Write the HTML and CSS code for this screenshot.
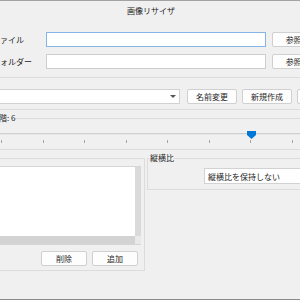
FILE: index.html
```html
<!DOCTYPE html>
<html lang="ja">
<head>

    <meta charset="UTF-8">
    <title>画像リサイザ</title>

    <link rel="stylesheet" href="styles.css">

</head>
<body>

    <div class="window">

        <div class="titlebar">画像リサイザ</div>

        <div class="content">

            <div class="file-row">
                <span class="row-label">入力ファイル</span>
                <input type="text" class="text-input is-focused">
                <button class="btn btn-browse">参照...</button>
            </div>

            <div class="file-row">
                <span class="row-label">出力フォルダー</span>
                <input type="text" class="text-input">
                <button class="btn btn-browse">参照...</button>
            </div>

            <div class="group preset-group">
                <div class="combo preset-combo">
                    <span class="combo-text"></span>
                    <span class="combo-arrow"></span>
                </div>
                <button class="btn btn-preset">名前変更</button>
                <button class="btn btn-preset">新規作成</button>
                <button class="btn btn-preset">削除</button>
            </div>

            <fieldset class="group slider-group">
                <legend>縮小段階: 6</legend>
                <div class="slider">
                    <div class="slider-track"></div>
                    <div class="slider-ticks">
                        <span></span><span></span><span></span><span></span>
                        <span></span><span></span><span></span><span></span>
                    </div>
                    <svg class="slider-thumb" style="left: 85.714%" width="9" height="8" viewBox="0 0 9 8">
                        <polygon points="0,0 9,0 9,4 4.5,8 0,4" fill="#0078d7"/>
                    </svg>
                </div>
            </fieldset>

            <div class="lower">

                <fieldset class="group list-group">
                    <legend>サイズ</legend>
                    <div class="list-box">
                        <div class="list-items"></div>
                        <div class="scroll-v"></div>
                        <div class="scroll-h"></div>
                        <div class="scroll-corner"></div>
                    </div>
                    <div class="list-buttons">
                        <button class="btn btn-small">削除</button>
                        <button class="btn btn-small">追加</button>
                    </div>
                </fieldset>

                <fieldset class="group ratio-group">
                    <legend>縦横比</legend>
                    <div class="combo ratio-combo">
                        <span class="combo-text">縦横比を保持しない</span>
                    </div>
                </fieldset>

            </div>

        </div>

    </div>

</body>
</html>
```

FILE: styles.css
```css
html {
    box-sizing: border-box;
}

*,
*:before,
*:after {
    box-sizing: inherit;
}

body {
    margin: 0;
    width: 300px;
    height: 300px;
    overflow: hidden;
    background: #f0f0f0;
    font-family: "Noto Sans CJK JP", sans-serif;
    font-size: 8px;
    color: #1e1e1e;
}

button,
input {
    font: inherit;
    color: inherit;
}

.window {
    margin-left: -36px;
    width: 374px;
    height: 300px;
    padding: 0 8px;
    border-top: 1px solid #a3a3a3;
    border-bottom: 1px solid #8a8a8a;
}

.titlebar {
    height: 20px;
    line-height: 20px;
    text-align: center;
}

.content {
    padding-top: 11px;
}

/* file rows */

.file-row {
    display: flex;
    align-items: center;
    height: 15px;
    padding-left: 4px;
}

.file-row + .file-row {
    margin-top: 7px;
}

.row-label {
    width: 70px;
    flex: none;
    line-height: 15px;
}

.text-input {
    flex: none;
    width: 220px;
    height: 15px;
    margin: 0 6px 0 0;
    padding: 0;
    border: 1px solid #cdcdcd;
    background: #fff;
    outline: 0;
}

.text-input.is-focused {
    border-color: #85b5e6;
}

.btn {
    flex: none;
    height: 15px;
    margin: 0;
    padding: 0;
    line-height: 13px;
    border: 1px solid #d0d0d0;
    border-radius: 2px;
    background: #fdfdfd;
    text-align: center;
}

.btn-browse {
    width: 50px;
}

/* groups */

.group {
    margin: 0;
    border: 1px solid #dcdcdc;
    min-width: 0;
}

.group legend {
    padding: 0;
    line-height: 10px;
}

.preset-group {
    display: flex;
    margin-top: 8px;
    padding: 11px 0 5px 6px;
}

.combo {
    display: flex;
    align-items: center;
    flex: none;
    height: 15px;
    border: 1px solid #d2d2d2;
    background: #fff;
}

.preset-combo {
    width: 201px;
    margin-right: 7px;
    justify-content: flex-end;
    padding-right: 3px;
}

.combo-arrow {
    width: 0;
    height: 0;
    border-left: 3px solid transparent;
    border-right: 3px solid transparent;
    border-top: 3px solid #555;
}

.btn-preset {
    width: 50px;
    margin-right: 5px;
}

/* slider */

.slider-group {
    margin-top: 3px;
    padding: 0 0 6px 2px;
}

.slider {
    position: relative;
    width: 292px;
    margin: 6px 0 0 26px;
    padding-top: 4px;
}

.slider-track {
    width: 400px;
    height: 2px;
    margin-left: -30px;
    border-top: 1px solid #cfcfcf;
    background: #e6e6e6;
}

.slider-ticks {
    display: flex;
    justify-content: space-between;
    height: 3px;
    margin-top: 5px;
}

.slider-ticks span {
    width: 1px;
    background: #a5a5a5;
}

.slider-thumb {
    position: absolute;
    top: 2px;
    margin-left: -4px;
    display: block;
}

/* lower groups */

.lower {
    display: flex;
    align-items: flex-start;
    gap: 2px;
    margin-top: 3px;
}

.list-group {
    flex: none;
    width: 173px;
    padding: 3px 3px 4px 2px;
}

.list-box {
    display: grid;
    grid-template-columns: 1fr 6px;
    grid-template-rows: 1fr 8px;
    height: 79px;
    border: 1px solid #d6d6d6;
    border-right: 0;
    background: #fff;
}

.scroll-v {
    background: #dadada;
}

.scroll-h {
    background: #d3d3d3;
}

.scroll-corner {
    background: #e9e9e9;
}

.list-buttons {
    display: flex;
    justify-content: flex-end;
    gap: 5px;
    margin: 6px 3px 0 0;
}

.btn-small {
    width: 46px;
}

.ratio-group {
    flex: none;
    width: 184px;
    padding: 5px 0 5px 2px;
}

.ratio-combo {
    height: 16px;
    margin-left: 54px;
    padding-left: 3px;
}
```
